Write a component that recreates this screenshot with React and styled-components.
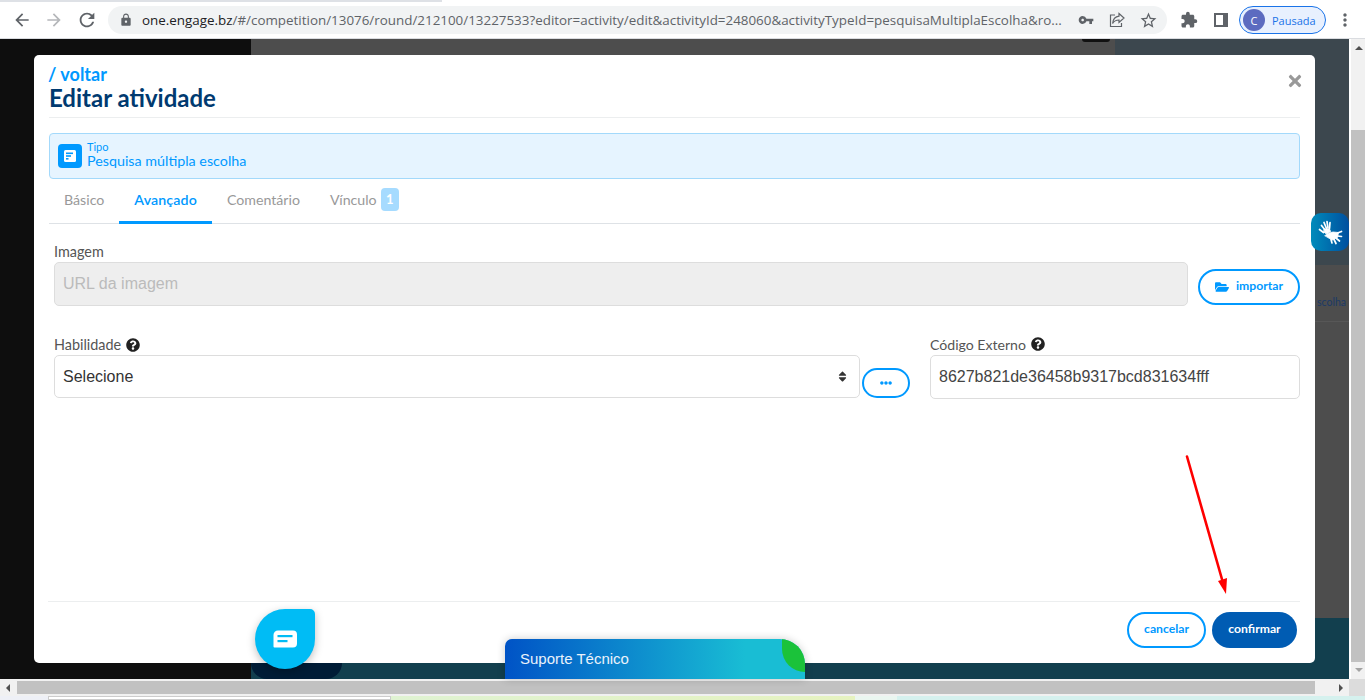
import styled, { createGlobalStyle } from "styled-components";
import {
  FaEllipsisH,
  FaFolderOpen,
  FaQuestionCircle,
  FaSort,
  FaTimes,
} from "react-icons/fa";
import {
  MdArrowBack,
  MdArrowForward,
  MdExtension,
  MdLock,
  MdMoreVert,
  MdRefresh,
  MdStarBorder,
  MdVpnKey,
} from "react-icons/md";

const tabs = [
  { id: "basico", text: "Básico" },
  { id: "avancado", text: "Avançado", active: true },
  { id: "comentario", text: "Comentário" },
  { id: "vinculo", text: "Vínculo", badge: 1 },
];

const GlobalStyle = createGlobalStyle`
  html, body {
    margin: 0;
    padding: 0;
    overflow: hidden;
    background: #fff;
  }
  * {
    box-sizing: border-box;
  }
`;

const UI_FONT = `Lato, "Noto Sans", sans-serif`;
const FIELD_FONT = `"Liberation Sans", Arial, sans-serif`;

const SignHands = () => (
  <svg width="26" height="26" viewBox="0 0 26 26" fill="none" stroke="#fff" strokeLinecap="round">
    <g strokeWidth="1.7">
      <path d="M4.500 6.500 8 11" />
      <path d="M7 3.500 9.500 9.500" />
      <path d="M10 2.500 11 9" />
      <path d="M13 3.500 12.500 9.500" />
      <path d="M2.500 10.500 6.500 13.500" />
    </g>
    <path d="M7.500 10h5l1 2.500-4 2.500-2.500-2z" fill="#fff" strokeWidth="1" />
    <path d="M8 16.500c2-1 4-3 8-3.500l5.500.5-1 5-5 2.500-3-1.500z" fill="#fff" stroke="#fff" strokeWidth="0.8" />
    <g strokeWidth="1.700">
      <path d="M20.500 14 24.500 12.500" />
      <path d="M20.500 17 24.500 17.500" />
      <path d="M19.500 19.500 22.500 22" />
      <path d="M17 20.500 19 24.500" />
      <path d="M14 20.500 15 24" />
    </g>
  </svg>
);

export default function App() {
  return (
    <Shell>
      <GlobalStyle />
      <TabStrip />
      <Toolbar>
        <NavButton><MdArrowBack size={20} /></NavButton>
        <NavButton $disabled><MdArrowForward size={20} /></NavButton>
        <NavButton><MdRefresh size={22} /></NavButton>
        <Omnibox>
          <MdLock size={14} color="#5f6368" />
          <Url>
            <strong>one.engage.bz</strong>
            /#/competition/13076/round/212100/13227533?editor=activity/edit&activityId=248060&activityTypeId=pesquisaMultiplaEscolha&ro...
          </Url>
          <OmniIcons>
            <MdVpnKey size={16} color="#5f6368" />
            <svg width="16" height="16" viewBox="0 0 16 16" fill="none" stroke="#5f6368" strokeWidth="1.2">
              <path d="M10 1.500 15 6l-5 4.500V8C7 8 5 9 3.600 11.500 4 7.500 6.500 4.600 10 4.200z" />
              <path d="M6 3H1.500v11.500h11V11" />
            </svg>
            <MdStarBorder size={19} color="#5f6368" />
          </OmniIcons>
        </Omnibox>
        <ExtensionIcons>
          <MdExtension size={18} color="#5f6368" />
          <SidePanelIcon />
        </ExtensionIcons>
        <ProfilePill>
          <Avatar>C</Avatar>
          Pausada
        </ProfilePill>
        <MenuButton><MdMoreVert size={20} /></MenuButton>
      </Toolbar>

      <Viewport>
        <Page>
          <Backdrop>
            <SideColumn />
            <CenterColumn><CenterBump /></CenterColumn>
            <RightColumn>
              <RightTop />
              <RightRow>scolha</RightRow>
              <RightFill />
            </RightColumn>
          </Backdrop>

          <Modal>
            <ModalHeader>
              <BackLink>/ voltar</BackLink>
              <Title>Editar atividade</Title>
              <CloseIcon><FaTimes size={18} /></CloseIcon>
            </ModalHeader>

            <TypeAlert>
              <TypeIcon>
                <svg width="14" height="14" viewBox="0 0 14 14">
                  <rect x="1" y="1" width="12" height="12" rx="1.5" fill="#fff" />
                  <rect x="3" y="3.500" width="7" height="1.600" fill="#09f" />
                  <rect x="3" y="6.200" width="5" height="1.600" fill="#09f" />
                  <rect x="3" y="9" width="2.500" height="1.600" fill="#09f" />
                </svg>
              </TypeIcon>
              <TypeText>
                <small>Tipo</small>
                <span>Pesquisa múltipla escolha</span>
              </TypeText>
            </TypeAlert>

            <TabBar>
              {tabs.map(({ id, text, active, badge }) => (
                <Tab key={id} $active={active}>
                  {text}
                  {badge && <TabBadge>{badge}</TabBadge>}
                </Tab>
              ))}
            </TabBar>

            <FormBody>
              <ImageRow>
                <Field $grow>
                  <Label>Imagem</Label>
                  <ImageInput disabled placeholder="URL da imagem" />
                </Field>
                <OutlineButton $wide>
                  <FaFolderOpen size={14} />
                  importar
                </OutlineButton>
              </ImageRow>

              <SkillRow>
                <Field $grow>
                  <Label>
                    Habilidade <FaQuestionCircle size={14} color="#222" />
                  </Label>
                  <SelectBox>
                    Selecione
                    <FaSort size={13} color="#333" />
                  </SelectBox>
                </Field>
                <DotsButton><FaEllipsisH size={12} /></DotsButton>
                <ExternalField>
                  <ExternalLabel>
                    Código Externo <FaQuestionCircle size={14} color="#222" />
                  </ExternalLabel>
                  <TextInput readOnly value="8627b821de36458b9317bcd831634fff" />
                </ExternalField>
              </SkillRow>
            </FormBody>

            <ModalFooter>
              <OutlineButton>cancelar</OutlineButton>
              <ConfirmButton>confirmar</ConfirmButton>
            </ModalFooter>
          </Modal>

          <ArrowMark width="50" height="145" viewBox="0 0 50 145">
            <line x1="4" y1="1.500" x2="39.500" y2="126" stroke="#fe0000" strokeWidth="2.600" strokeLinecap="round" />
            <polygon points="43,139 35,126 44,123" fill="#fe0000" />
          </ArrowMark>

          <ChatShadow />
          <ChatBubble>
            <svg width="24" height="18" viewBox="0 0 24 18">
              <path d="M5 .5h15a4 4 0 0 1 4 4v9a4 4 0 0 1-4 4H1.500a1 1 0 0 1-1-1V5A4.500 4.500 0 0 1 5 .5z" fill="#fff" />
              <rect x="4.500" y="5" width="15" height="2.200" fill="#00bcf5" />
              <rect x="4.500" y="10" width="10" height="2.200" fill="#00bcf5" />
            </svg>
          </ChatBubble>
          <SupportWidget>
            Suporte Técnico
            <StatusLeaf />
          </SupportWidget>
          <SignWidget><SignHands /></SignWidget>
        </Page>

        <VerticalBar>
          <ArrowUp />
          <VerticalThumb />
          <ArrowDown />
        </VerticalBar>
      </Viewport>

      <HorizontalBar>
        <ArrowLeft />
        <HorizontalThumb />
        <ArrowRight />
        <Corner />
      </HorizontalBar>

      <BottomStrip>
        <StripPatch $w={48} $bg="#eef0f6" />
        <StripPatch $w={343} $bg="#fff" $border />
        <StripPatch $w={464} $bg="linear-gradient(90deg, #dff3d2, #e6f3c0)" />
        <StripPatch $w={42} $bg="#eaf6f0" />
        <StripPatch $w={468} $bg="#d5f1ee" />
      </BottomStrip>
    </Shell>
  );
}

const Shell = styled.div`
  width: 1365px;
  height: 700px;
  overflow: hidden;
  display: flex;
  flex-direction: column;
  font-family: ${UI_FONT};
`;

const TabStrip = styled.div`
  height: 2px;
  width: 442px;
  background: #dee1e6;
`;

const Toolbar = styled.div`
  height: 37px;
  display: flex;
  align-items: center;
  padding: 0 0 0 12px;
  background: #fff;
  border-bottom: 1px solid #dadce0;
`;

const NavButton = styled.div`
  width: 32px;
  display: flex;
  color: ${({ $disabled }) => ($disabled ? "#b5b7ba" : "#5f6368")};
`;

const Omnibox = styled.div`
  width: 1059px;
  height: 28px;
  padding: 0 9px 0 11px;
  display: flex;
  align-items: center;
  gap: 9px;
  border-radius: 14px;
  background: #f1f3f4;
`;

const Url = styled.div`
  flex: 1;
  overflow: hidden;
  white-space: nowrap;
  font: 13.4px "Open Sans", sans-serif;
  color: #5f6368;

  strong {
    font-weight: 400;
    color: #202124;
  }
`;

const OmniIcons = styled.div`
  width: 80px;
  display: flex;
  align-items: center;
  justify-content: space-between;
`;

const ExtensionIcons = styled.div`
  width: 72px;
  padding: 0 11px 0 13px;
  display: flex;
  align-items: center;
  justify-content: space-between;
`;

const SidePanelIcon = styled.span`
  width: 14px;
  height: 14px;
  border: 2px solid #5f6368;
  border-right-width: 5px;
`;

const ProfilePill = styled.div`
  width: 87px;
  height: 28px;
  padding: 0 3px;
  display: flex;
  align-items: center;
  gap: 7px;
  border: 1px solid #1a73e8;
  border-radius: 14px;
  background: #e8f0fe;
  color: #1a73e8;
  font: 11px "Open Sans", sans-serif;
`;

const Avatar = styled.span`
  width: 22px;
  height: 22px;
  border-radius: 50%;
  display: flex;
  align-items: center;
  justify-content: center;
  background: #5c6bc0;
  color: #fff;
  font-size: 11px;
`;

const MenuButton = styled.div`
  margin-left: 9px;
  display: flex;
  color: #5f6368;
`;

const Viewport = styled.div`
  height: 640px;
  display: flex;
`;

const Page = styled.div`
  position: relative;
  width: 1349px;
  height: 100%;
`;

const Backdrop = styled.div`
  height: 100%;
  display: grid;
  grid-template-columns: 251px 864px 234px;
`;

const SideColumn = styled.div`
  background: #0e0e0e;
`;

const CenterColumn = styled.div`
  display: flex;
  flex-direction: column;
  align-items: flex-end;
  padding-right: 5px;
  background: linear-gradient(#4d4d4d 579px, #123f4e 579px);
`;

const CenterBump = styled.div`
  width: 28px;
  height: 3px;
  border-radius: 0 0 5px 5px;
  background: #111;
`;

const RightColumn = styled.div`
  display: flex;
  flex-direction: column;
`;

const RightTop = styled.div`
  height: 226px;
  background: #3c474e;
`;

const RightRow = styled.div`
  height: 57px;
  padding: 31px 0 0 202px;
  background: #4d4d4d;
  border-bottom: 1px solid #575757;
  color: #1c3a66;
  font-size: 10.500px;
`;

const RightFill = styled.div`
  flex: 1;
  background: linear-gradient(#4d4d4d 296px, #123f4e 296px);
`;

const Modal = styled.div`
  position: absolute;
  top: 16px;
  left: 34px;
  width: 1281px;
  height: 608px;
  padding: 0 15px;
  display: flex;
  flex-direction: column;
  border-radius: 5px;
  background: #fff;
`;

const ModalHeader = styled.header`
  position: relative;
  height: 63px;
  padding-top: 9px;
  border-bottom: 1px solid #eceeef;
`;

const BackLink = styled.div`
  margin-left: -1px;
  font-size: 18px;
  line-height: 20px;
  font-weight: 700;
  color: #09f;
`;

const Title = styled.h1`
  margin: 0;
  font-size: 24px;
  line-height: 28px;
  font-weight: 700;
  color: #003a70;
`;

const CloseIcon = styled.div`
  position: absolute;
  top: 17px;
  right: -4px;
  display: flex;
  color: #999;
`;

const TypeAlert = styled.div`
  height: 46px;
  margin-top: 15px;
  padding: 0 8px;
  display: flex;
  align-items: center;
  gap: 5px;
  border: 1px solid #a3d9fb;
  border-radius: 4px;
  background: #e6f4ff;
`;

const TypeIcon = styled.div`
  width: 24px;
  height: 24px;
  display: flex;
  align-items: center;
  justify-content: center;
  border-radius: 4px;
  background: #09f;
`;

const TypeText = styled.div`
  display: flex;
  flex-direction: column;
  padding-bottom: 2px;
  color: #09f;

  small {
    font-size: 11px;
    line-height: 12px;
  }

  span {
    font-size: 14.300px;
    line-height: 16px;
  }
`;

const TabBar = styled.nav`
  height: 45px;
  display: flex;
  border-bottom: 1px solid #dee2e6;
`;

const Tab = styled.div`
  height: 45px;
  padding: 0 15px 2px;
  display: flex;
  align-items: center;
  gap: 4px;
  font-size: 14.200px;
  letter-spacing: ${({ $active }) => ($active ? "0.12px" : "0")};
  white-space: nowrap;
  color: ${({ $active }) => ($active ? "#09f" : "#999")};
  font-weight: ${({ $active }) => ($active ? 600 : 400)};
  border-bottom: 3px solid ${({ $active }) => ($active ? "#09f" : "transparent")};
`;

const TabBadge = styled.span`
  width: 18px;
  height: 23px;
  display: flex;
  align-items: center;
  justify-content: center;
  border-radius: 4px;
  background: #a6dbff;
  color: #fff;
  font-size: 13px;
  font-weight: 700;
`;

const FormBody = styled.div`
  flex: 1;
  padding: 19px 0 0 5px;
  display: flex;
  flex-direction: column;
  gap: 30px;
`;

const ImageRow = styled.div`
  display: flex;
  align-items: flex-end;
  gap: 10px;
`;

const SkillRow = styled.div`
  display: flex;
  align-items: flex-end;
`;

const Field = styled.div`
  flex: ${({ $grow }) => ($grow ? 1 : "none")};
  display: flex;
  flex-direction: column;
  gap: 2px;
`;

const ExternalField = styled(Field)`
  width: 370px;
  margin-left: 20px;
`;

const Label = styled.label`
  height: 17px;
  display: flex;
  align-items: center;
  gap: 5px;
  font-size: 14.400px;
  color: #555;
`;

const ExternalLabel = styled(Label)`
  margin-top: -1px;
  padding-bottom: 1px;
  font-size: 14.100px;
`;

const ImageInput = styled.input`
  height: 44px;
  padding: 0 8px;
  border: 1px solid #ddd;
  border-radius: 5px;
  background: #eee;
  font: 16px ${FIELD_FONT};

  &::placeholder {
    color: #bbb;
  }
`;

const SelectBox = styled.div`
  height: 43px;
  margin-bottom: 1px;
  padding: 0 10px 0 8px;
  display: flex;
  align-items: center;
  justify-content: space-between;
  border: 1px solid #ddd;
  border-radius: 5px;
  color: #333;
  font: 16px ${FIELD_FONT};
`;

const TextInput = styled.input`
  height: 44px;
  padding: 0 8px;
  border: 1px solid #ddd;
  border-radius: 5px;
  color: #444;
  font: 16px ${FIELD_FONT};
  outline: none;
`;

const OutlineButton = styled.button`
  width: ${({ $wide }) => ($wide ? "102px" : "79px")};
  height: 36px;
  margin-bottom: 1px;
  padding: 0 0 3px;
  display: flex;
  align-items: center;
  justify-content: center;
  gap: 7px;
  border: 2px solid #09f;
  border-radius: 18px;
  background: #fff;
  color: #09f;
  font: 700 12.200px ${UI_FONT};

  svg {
    margin-top: 2px;
  }
`;

const DotsButton = styled.button`
  width: 48px;
  height: 30px;
  margin: 0 0 1px 2px;
  padding: 0;
  display: flex;
  align-items: center;
  justify-content: center;
  border: 2px solid #09f;
  border-radius: 15px;
  background: #fff;
  color: #09f;
`;

const ConfirmButton = styled.button`
  width: 85px;
  height: 36px;
  padding: 0 0 3px;
  border: 0;
  border-radius: 18px;
  background: #005cb3;
  color: #fff;
  font: 700 12.200px ${UI_FONT};
`;

const ModalFooter = styled.footer`
  height: 62px;
  margin-left: -1px;
  padding: 10px 3px 0 0;
  display: flex;
  justify-content: flex-end;
  gap: 6px;
  border-top: 1px solid #eceeef;
`;

const ArrowMark = styled.svg`
  position: absolute;
  top: 416px;
  left: 1183px;
`;

const ChatShadow = styled.div`
  position: absolute;
  top: 624px;
  left: 251px;
  width: 91px;
  height: 16px;
  border-radius: 0 0 16px 16px;
  background: #001c36;
`;

const ChatBubble = styled.div`
  position: absolute;
  top: 570px;
  left: 255px;
  width: 60px;
  height: 60px;
  display: flex;
  align-items: center;
  justify-content: center;
  border-radius: 50% 5px 50% 50%;
  background: #00bcf5;
  box-shadow: 0 3px 8px rgba(0, 0, 0, 0.25);
`;

const SupportWidget = styled.div`
  position: absolute;
  top: 600px;
  left: 505px;
  width: 300px;
  height: 40px;
  padding: 11px 15px 0;
  overflow: hidden;
  border-radius: 7px 25px 0 0;
  background: linear-gradient(90deg, #0053c6, #19bdd4 80%);
  box-shadow: 0 0 8px rgba(0, 0, 0, 0.2);
  color: #eaf2fb;
  font: 15px ${FIELD_FONT};
`;

const StatusLeaf = styled.span`
  position: absolute;
  top: 0;
  right: 0;
  width: 23px;
  height: 33px;
  border-radius: 0 0 0 23px;
  background: #1bc23a;
`;

const SignWidget = styled.div`
  position: absolute;
  top: 174px;
  left: 1311px;
  width: 38px;
  height: 38px;
  display: flex;
  align-items: center;
  justify-content: center;
  border-radius: 10px;
  background: linear-gradient(90deg, #008bbb, #004f9f);
`;

const VerticalBar = styled.div`
  width: 16px;
  height: 100%;
  padding-left: 2px;
  display: flex;
  flex-direction: column;
  align-items: center;
  background: #f1f1f1;
  border-left: 2px solid #fff;
`;

const ArrowUp = styled.span`
  margin-top: 7px;
  border: 4px solid transparent;
  border-top: 0;
  border-bottom: 4px solid #505050;
`;

const VerticalThumb = styled.div`
  width: 14px;
  height: 532px;
  margin-top: 80px;
  margin-left: -2px;
  background: #c1c1c1;
`;

const ArrowDown = styled.span`
  margin-top: 6px;
  border: 4px solid transparent;
  border-bottom: 0;
  border-top: 4px solid #a3a3a3;
`;

const HorizontalBar = styled.div`
  height: 17px;
  display: flex;
  align-items: center;
  background: #f1f1f1;
`;

const ArrowLeft = styled.span`
  margin-left: 6px;
  border: 4px solid transparent;
  border-left: 0;
  border-right: 4px solid #505050;
`;

const HorizontalThumb = styled.div`
  width: 1298px;
  height: 13px;
  margin-left: 7px;
  background: #c1c1c1;
`;

const ArrowRight = styled.span`
  margin-left: 24px;
  border: 4px solid transparent;
  border-right: 0;
  border-left: 4px solid #505050;
`;

const Corner = styled.div`
  width: 16px;
  height: 17px;
  margin-left: auto;
  background: #dcdcdc;
`;

const BottomStrip = styled.div`
  height: 4px;
  display: flex;
`;

const StripPatch = styled.div`
  width: ${({ $w }) => $w}px;
  background: ${({ $bg }) => $bg};
  border: ${({ $border }) => ($border ? "1px solid #ccc" : "none")};
`;
